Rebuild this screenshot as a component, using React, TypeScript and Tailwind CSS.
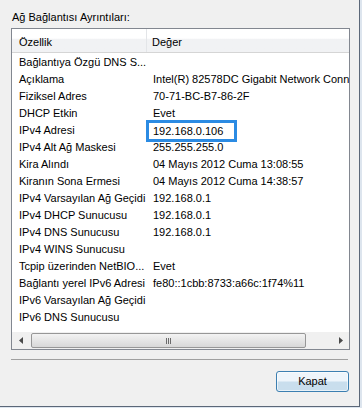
const rows: [string, string][] = [
  ['Bağlantıya Özgü DNS S...', ''],
  ['Açıklama', 'Intel(R) 82578DC Gigabit Network Connection'],
  ['Fiziksel Adres', '70-71-BC-B7-86-2F'],
  ['DHCP Etkin', 'Evet'],
  ['IPv4 Adresi', '192.168.0.106'],
  ['IPv4 Alt Ağ Maskesi', '255.255.255.0'],
  ['Kira Alındı', '04 Mayıs 2012 Cuma 13:08:55'],
  ['Kiranın Sona Ermesi', '04 Mayıs 2012 Cuma 14:38:57'],
  ['IPv4 Varsayılan Ağ Geçidi', '192.168.0.1'],
  ['IPv4 DHCP Sunucusu', '192.168.0.1'],
  ['IPv4 DNS Sunucusu', '192.168.0.1'],
  ['IPv4 WINS Sunucusu', ''],
  ['Tcpip üzerinden NetBIO...', 'Evet'],
  ['Bağlantı yerel IPv6 Adresi', 'fe80::1cbb:8733:a66c:1f74%11'],
  ['IPv6 Varsayılan Ağ Geçidi', ''],
  ['IPv6 DNS Sunucusu', ''],
];

export default function App() {
  return (
    <div
      className="w-[362px] h-[408px] bg-[#dde5ee] text-[11px] text-black"
      style={{ fontFamily: '"Liberation Sans", Arial, sans-serif' }}
    >
      <div className="w-[360px] h-[407px] bg-[#f0f0f0] border-r border-b border-[#5b6778] flex flex-col">
        {/* Title */}
        <div className="h-[28px] pl-[12px] pt-[11px] leading-[13px]">Ağ Bağlantısı Ayrıntıları:</div>

        {/* List view */}
        <div className="ml-[11px] w-[339px] h-[322px] border border-[#828790] bg-white flex flex-col">
          {/* Header */}
          <div className="h-[24px] flex border-b border-[#d5d5d5] bg-gradient-to-b from-white from-40% to-[#f1f2f4] to-45%">
            <div className="w-[135px] pl-[7px] pt-[7px] leading-[13px] border-r border-[#e3e5e8]">Özellik</div>
            <div className="pl-[5px] pt-[7px] leading-[13px]">Değer</div>
          </div>

          {/* Rows */}
          <div className="flex-1 pt-[1px] overflow-hidden">
            {rows.map(([k, v], i) => (
              <div key={i} className="h-[17px] flex items-center whitespace-nowrap">
                <div className="w-[136px] pl-[7px] shrink-0 overflow-hidden">{k}</div>
                <div className="pl-[5px]">
                  {k === 'IPv4 Adresi' ? (
                    <div className="-ml-[7px] w-[91px] h-[22px] pl-[4px] border-[3px] border-[#2b8be3] leading-[16px]">
                      {v}
                    </div>
                  ) : (
                    v
                  )}
                </div>
              </div>
            ))}
          </div>

          {/* Horizontal scrollbar */}
          <div className="h-[17px] flex items-center bg-[#f0f0f0]">
            <div className="w-[17px] h-[17px] flex items-center justify-center">
              <svg width="4" height="7" viewBox="0 0 4 7">
                <path d="M4 0 L0 3.5 L4 7 Z" fill="#4a4a4a" />
              </svg>
            </div>
            <div className="ml-[2px] w-[275px] h-[15px] rounded-[2px] border border-[#979797] bg-gradient-to-b from-[#f3f3f3] to-[#d8d8d8] flex items-center justify-center">
              <div className="flex gap-[1px]">
                <div className="w-[1px] h-[6px] bg-[#6b6b6b]" />
                <div className="w-[1px] h-[6px] bg-[#6b6b6b]" />
                <div className="w-[1px] h-[6px] bg-[#6b6b6b]" />
              </div>
            </div>
            <div className="flex-1" />
            <div className="w-[17px] h-[17px] flex items-center justify-center">
              <svg width="4" height="7" viewBox="0 0 4 7">
                <path d="M0 0 L4 3.5 L0 7 Z" fill="#4a4a4a" />
              </svg>
            </div>
          </div>
        </div>

        {/* Separator */}
        <div className="ml-[11px] mt-[9px] w-[337px] h-[1px] bg-[#a0a0a0]" />

        {/* Button */}
        <div className="flex justify-end pr-[10px] mt-[11px]">
          <button className="w-[73px] h-[21px] rounded-[3px] border border-[#3c7fb1] bg-gradient-to-b from-[#eef5fb] from-45% to-[#c9deed] to-55% text-[11px] leading-[13px] shadow-[inset_0_0_0_1px_rgba(255,255,255,0.6)]">
            Kapat
          </button>
        </div>
      </div>
    </div>
  );
}
